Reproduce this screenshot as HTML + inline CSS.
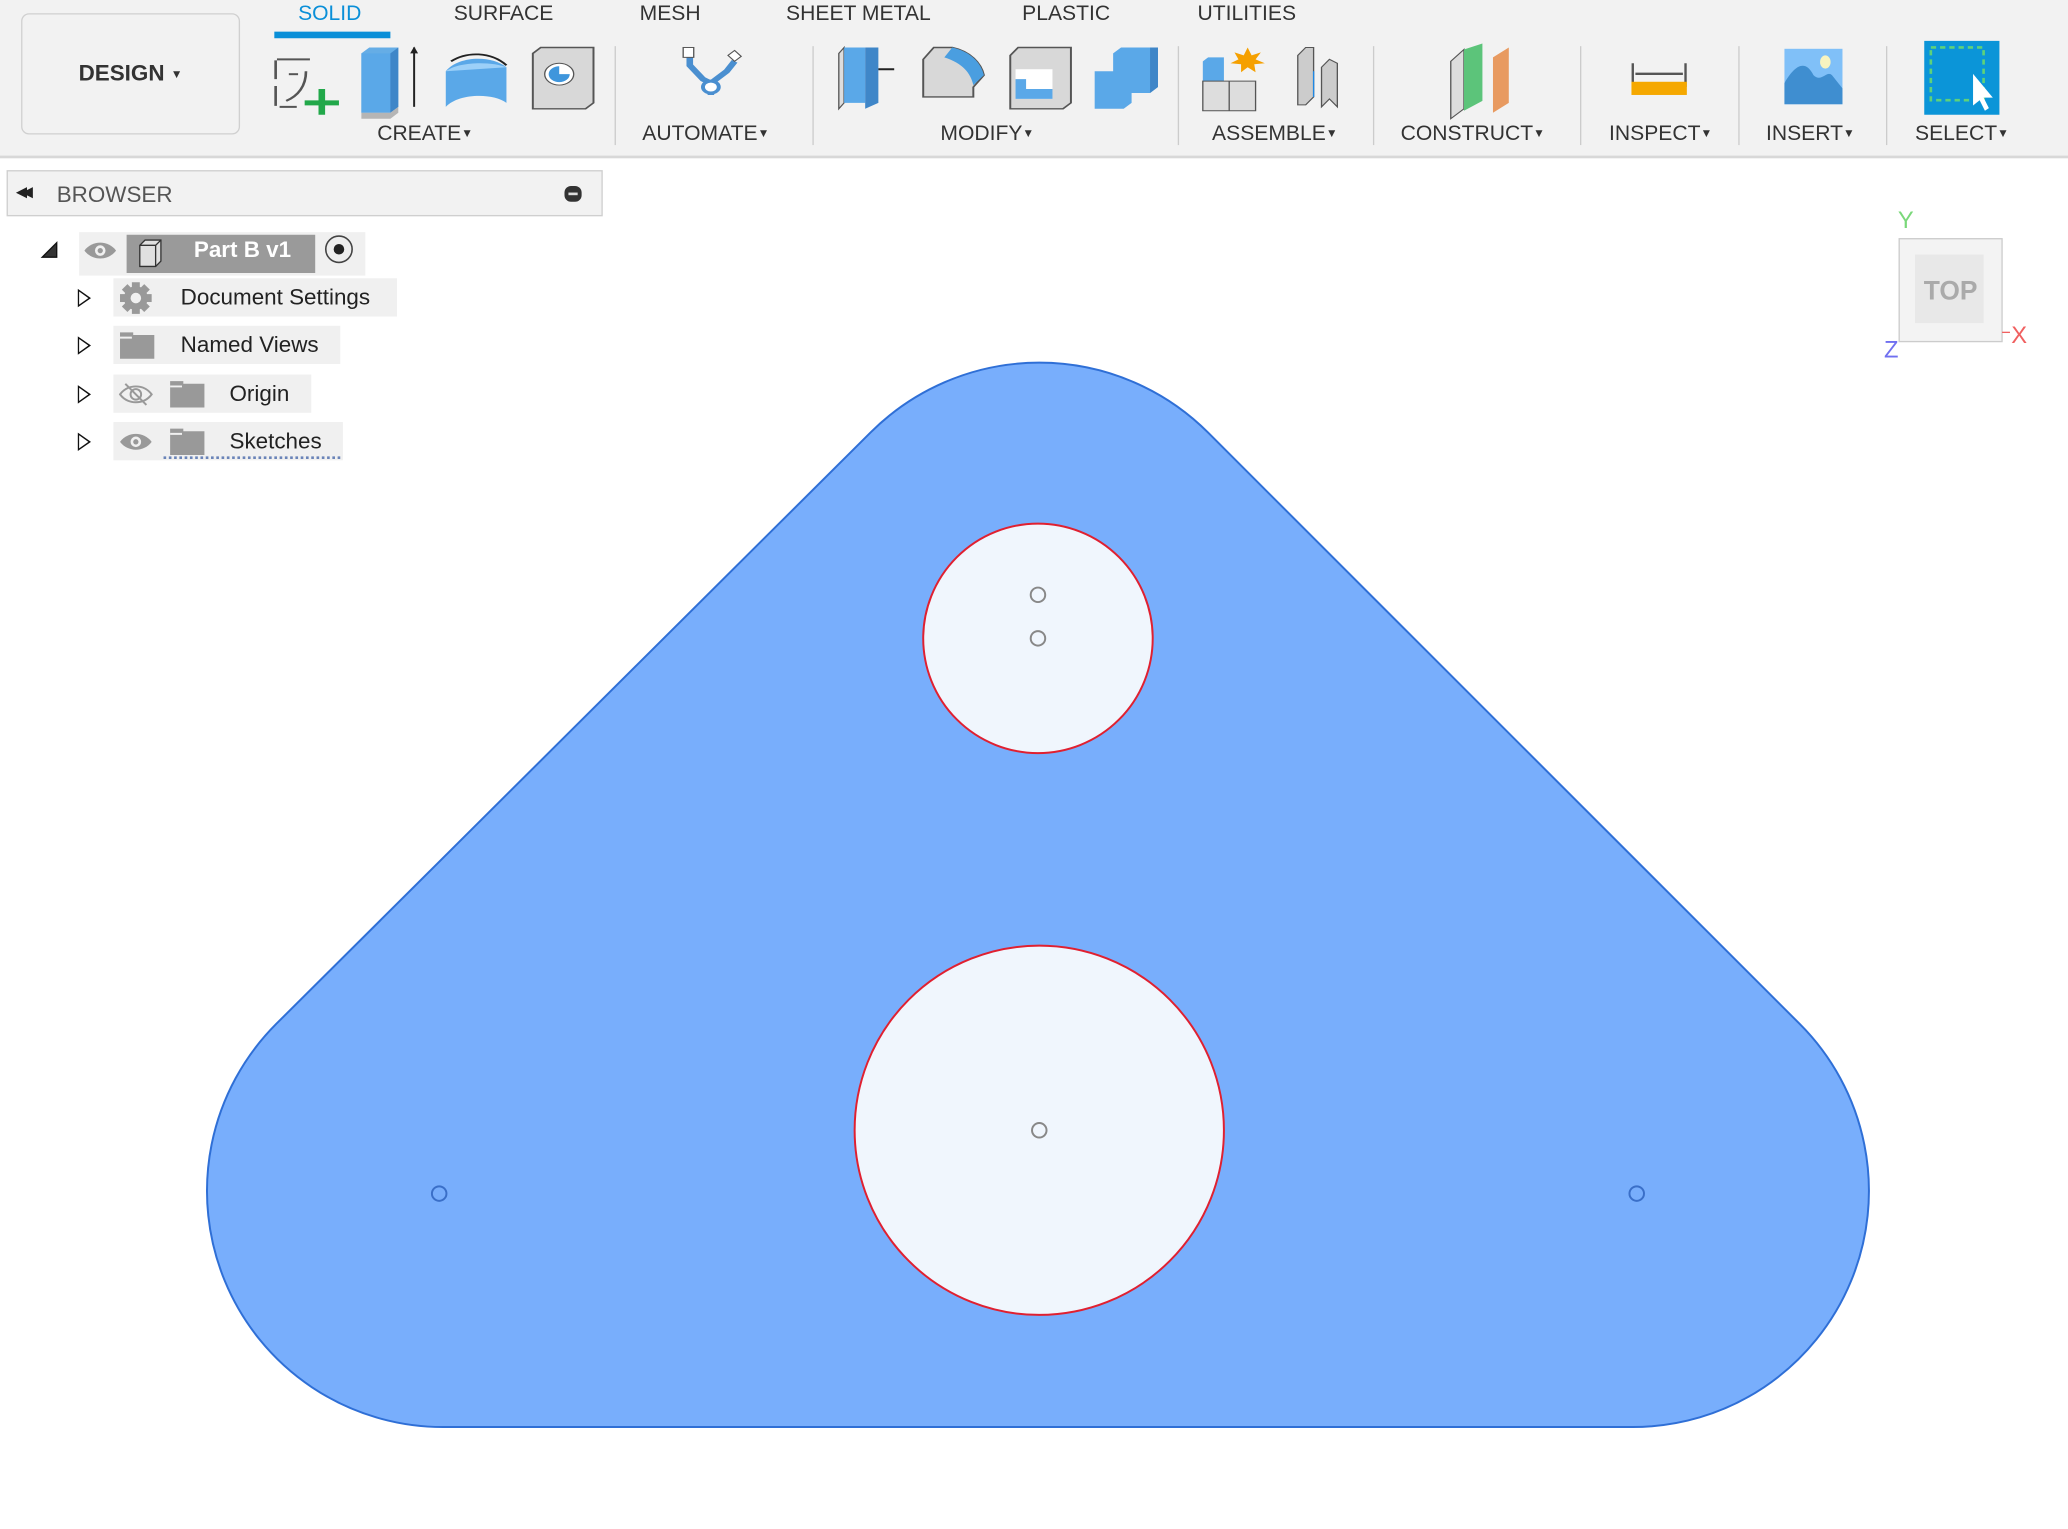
<!DOCTYPE html>
<html><head><meta charset="utf-8">
<style>
html,body{margin:0;padding:0;background:#fff;overflow:hidden;width:2068px;height:1528px}
#w{position:absolute;left:0;top:0;width:1568px;height:1159px;transform:scale(1.31888);transform-origin:0 0;font-family:"Liberation Sans",sans-serif;color:#333}
.tb{position:absolute;left:0;top:0;width:1568px;height:118px;background:#f2f2f2;border-bottom:2px solid #d8d8d8}
.design{position:absolute;left:16px;top:10px;width:164px;height:90px;border:1.5px solid #d0d0d0;border-radius:6px;background:#f2f2f2;font-size:17px;font-weight:bold;color:#333;display:flex;align-items:center;justify-content:center}
.tab{position:absolute;top:2px;font-size:16px;color:#333}
.lab{position:absolute;top:93px;font-size:16px;color:#333;white-space:nowrap}
.sep{position:absolute;top:35px;width:1px;height:75px;background:#ccc}
.tri{font-size:9px;vertical-align:2px}
.bh{position:absolute;left:5px;top:129px;width:452px;height:35px;background:#f2f2f2;border:1.5px solid #cfcfcf;box-sizing:border-box}
.row{position:absolute;background:#f0f0f0;font-size:17px;color:#222}
.exp{position:absolute;left:59px;width:0;height:0;border-top:7px solid transparent;border-bottom:7px solid transparent;border-left:10px solid #111}
.exp:after{content:"";position:absolute;left:-9px;top:-5px;border-top:5px solid transparent;border-bottom:5px solid transparent;border-left:7px solid #fff}
</style></head><body><div id="w">
<div class="tb">
 <div class="design">DESIGN&nbsp;<span class="tri">▼</span></div>
 <div class="tab" style="left:226px;color:#0a8fd8">SOLID</div>
 <div style="position:absolute;left:208px;top:24px;width:88px;height:5px;background:#0a8fd8"></div>
 <div class="tab" style="left:344px">SURFACE</div>
 <div class="tab" style="left:485px">MESH</div>
 <div class="tab" style="left:596px">SHEET METAL</div>
 <div class="tab" style="left:775px">PLASTIC</div>
 <div class="tab" style="left:908px">UTILITIES</div>
 <div class="lab" style="left:286px">CREATE<span class="tri">▼</span></div>
 <div class="lab" style="left:487px">AUTOMATE<span class="tri">▼</span></div>
 <div class="lab" style="left:713px">MODIFY<span class="tri">▼</span></div>
 <div class="lab" style="left:919px">ASSEMBLE<span class="tri">▼</span></div>
 <div class="lab" style="left:1062px">CONSTRUCT<span class="tri">▼</span></div>
 <div class="lab" style="left:1220px">INSPECT<span class="tri">▼</span></div>
 <div class="lab" style="left:1339px">INSERT<span class="tri">▼</span></div>
 <div class="lab" style="left:1452px">SELECT<span class="tri">▼</span></div>
 <div class="sep" style="left:466px"></div><div class="sep" style="left:616px"></div><div class="sep" style="left:893px"></div><div class="sep" style="left:1041px"></div><div class="sep" style="left:1198px"></div><div class="sep" style="left:1318px"></div><div class="sep" style="left:1430px"></div>
 <svg style="position:absolute;left:0;top:0" width="1568" height="118">
  <g transform="translate(0,9) scale(1,0.75)">
  <g stroke="#555" stroke-width="2" fill="none"><path d="M209 49V68M209 75V95M210 48H235M212 96H225M232 60c0 15-6 25-15 30"/><path d="M219 63h7"/></g>
  <path d="M244 78v26M231 92h26" stroke="#22a84a" stroke-width="5"/>
  <path d="M274 42l6-6h22v60l-6 6h-22z" fill="#65ade6"/><path d="M296 42h-22v60h22z" fill="#5aa8e8"/><path d="M296 42l6-6v60l-6 6z" fill="#3f86c8"/><path d="M274 102h22l6-6v6l-6 6h-22z" fill="#b5b5b5"/><path d="M314 36v60" stroke="#222" stroke-width="1.5"/><path d="M311 42l3-7 3 7z" fill="#222"/>
  <path d="M338 60c10-16 35-16 46-4v36c-10-10-36-10-46 4z" fill="#5aa8e8"/><path d="M338 60c10-10 35-10 46-4" fill="#9cd0f8"/><path d="M342 50c12-10 30-10 42 4" stroke="#222" stroke-width="1.8" fill="none"/>
  <path d="M404 42l6-6h40v56l-6 6h-40z" fill="#d8d8d8" stroke="#555" stroke-width="1.5"/><circle cx="424" cy="63" r="11" fill="#fff" stroke="#555"/><path d="M424 55a8 8 0 1 0 8 8h-8z" fill="#3f96dc"/>
  <path d="M523 44v10l10 14 6 4v12M557 50l-6 10-12 12" stroke="#4a8fd0" stroke-width="5" fill="none"/><circle cx="539" cy="76" r="6" fill="#fff" stroke="#4a8fd0" stroke-width="3"/><rect x="518" y="36" width="8" height="10" fill="#fff" stroke="#555"/><path d="M552 44l5-5 5 6-5 5z" fill="#fff" stroke="#555"/>
  <path d="M636 42l4-6v56l-4 6z" fill="#ddd" stroke="#555"/><path d="M640 36h16v56h-16z" fill="#5aa8e8"/><path d="M656 36l10-0v56l-10 6z" fill="#3f86c8"/><path d="M666 58h12" stroke="#222" stroke-width="2"/>
  <path d="M700 48l8-12h14c14 4 22 16 24 28l-8 12v10h-38z" fill="#d8d8d8" stroke="#555" stroke-width="1.5"/><path d="M722 36c14 4 22 16 24 28l-8 10c-2-12-8-22-22-28z" fill="#4a9ee0"/>
  <path d="M766 44l6-8h40v56l-6 6h-40z" fill="#d8d8d8" stroke="#555" stroke-width="1.5"/><rect x="770" y="58" width="28" height="30" fill="#fff"/><path d="M770 68h8v10h20v10h-28z" fill="#5aa8e8"/>
  <path d="M830 60h14v-18l6-6h28v40l-6 6h-14v10l-6 6h-22z" fill="#5aa8e8"/><path d="M872 36l6 0v40l-6 6z" fill="#3f86c8"/>
  <path d="M912 50l4-4h12v24h-16z" fill="#5aa8e8"/><path d="M912 70h40v30h-40z" fill="#ddd" stroke="#555"/><path d="M932 70v30" stroke="#555"/><path d="M946 36l3 8 7-3-4 7 7 4-8 1 1 8-6-5-5 5v-8l-8-1 6-4-3-7 7 3z" fill="#f5a000"/>
  <path d="M984 44l6-8h6v50l-6 8h-6z" fill="#ccc" stroke="#555"/><path d="M1008 48l-6 8v40l6-8 6 8v-44z" fill="#ccc" stroke="#555"/><path d="M996 60v26" stroke="#1e88e5"/>
  <path d="M1100 50l10-12v60l-10 10z" fill="#ddd" stroke="#555"/><path d="M1110 38l14-6v58l-14 10z" fill="#5cc47a"/><path d="M1132 46l12-10v56l-12 10z" fill="#e89a60"/>
  </g>
  <path d="M1238 48v18M1278 48v18M1240 56h36" stroke="#555" stroke-width="1.8"/><rect x="1237" y="62" width="42" height="10" fill="#f5a800"/>
  <rect x="1353" y="37" width="44" height="42" fill="#80c0f8"/><path d="M1353 79v-16c8-14 16-18 22-6 6 6 10-4 14 0l8 10v12z" fill="#3f8ed0"/><ellipse cx="1384" cy="47" rx="4" ry="5" fill="#f8f4c0"/>
  <rect x="1459" y="31" width="57" height="56" fill="#0b95d8"/><rect x="1464" y="36" width="40" height="40" fill="none" stroke="#5ed27a" stroke-width="2" stroke-dasharray="4 3"/><path d="M1496 56v24l5-4 4 8 3-2-4-8h7z" fill="#fff"/>
 </svg>
</div>

<div class="bh"><span style="position:absolute;left:6px;top:9px;font-size:11px;color:#222;letter-spacing:-4px">◀◀</span><span style="position:absolute;left:37px;top:8px;font-size:17px;color:#555">BROWSER</span><span style="position:absolute;left:422px;top:11px;width:13px;height:12px;border-radius:5px;background:#333"></span><span style="position:absolute;left:425px;top:16px;width:7px;height:2px;background:#ddd"></span></div>

<svg style="position:absolute;left:30px;top:182px" width="16" height="14"><path d="M2 13L13 2V13Z" fill="#333" stroke="#111"/></svg>
<div class="row" style="left:60px;top:176px;width:217px;height:33px"></div>
<svg style="position:absolute;left:63px;top:181px" width="26" height="18"><path d="M1 9c6-8 18-8 24 0c-6 8-18 8-24 0z" fill="#999"/><circle cx="13" cy="9" r="4" fill="#f0f0f0"/><circle cx="13" cy="9" r="2" fill="#999"/></svg>
<div style="position:absolute;left:96px;top:178px;width:143px;height:29px;background:#9a9a9a"></div>
<svg style="position:absolute;left:104px;top:180px" width="20" height="24"><path d="M2 6l4-4h12v16l-4 4H2z" fill="#e0e0e0" stroke="#333"/><path d="M14 6v16M2 6h12l4-4" stroke="#333" fill="none"/></svg>
<div style="position:absolute;left:147px;top:180px;font-size:17px;font-weight:bold;color:#fff">Part B v1</div>
<svg style="position:absolute;left:245px;top:177px" width="24" height="24"><circle cx="12" cy="12" r="10" fill="#eee" stroke="#444" stroke-width="1.2"/><circle cx="12" cy="12" r="4" fill="#222"/></svg>

<div class="exp" style="top:219px"></div>
<div class="row" style="left:86px;top:211px;width:215px;height:29px"></div>
<svg style="position:absolute;left:90px;top:213px" width="26" height="26"><g fill="#999"><circle cx="13" cy="13" r="9"/><rect x="10" y="1" width="6" height="24"/><rect x="1" y="10" width="24" height="6"/><rect x="10" y="1" width="6" height="24" transform="rotate(45 13 13)"/><rect x="10" y="1" width="6" height="24" transform="rotate(-45 13 13)"/></g><circle cx="13" cy="13" r="4" fill="#f0f0f0"/></svg>
<div style="position:absolute;left:137px;top:216px;font-size:17px;color:#222">Document Settings</div>

<div class="exp" style="top:255px"></div>
<div class="row" style="left:86px;top:247px;width:172px;height:29px"></div>
<svg style="position:absolute;left:90px;top:251px" width="28" height="22"><path d="M1 1h10v2h16v18H1z" fill="#999"/><path d="M1 5h9" stroke="#f0f0f0" stroke-width="1.5"/></svg>
<div style="position:absolute;left:137px;top:252px;font-size:17px;color:#222">Named Views</div>

<div class="exp" style="top:292px"></div>
<div class="row" style="left:86px;top:284px;width:150px;height:29px"></div>
<svg style="position:absolute;left:90px;top:289px" width="26" height="20"><path d="M1 10c6-8 18-8 24 0c-6 8-18 8-24 0z" fill="none" stroke="#999" stroke-width="1.5"/><circle cx="13" cy="10" r="4" fill="none" stroke="#999" stroke-width="1.5"/><path d="M5 2l16 16" stroke="#999" stroke-width="1.5"/></svg>
<svg style="position:absolute;left:128px;top:288px" width="28" height="22"><path d="M1 1h10v2h16v18H1z" fill="#999"/><path d="M1 5h9" stroke="#f0f0f0" stroke-width="1.5"/></svg>
<div style="position:absolute;left:174px;top:289px;font-size:17px;color:#222">Origin</div>

<div class="exp" style="top:328px"></div>
<div class="row" style="left:86px;top:320px;width:174px;height:29px"></div>
<svg style="position:absolute;left:90px;top:325px" width="26" height="20"><path d="M1 10c6-8 18-8 24 0c-6 8-18 8-24 0z" fill="#999"/><circle cx="13" cy="10" r="4" fill="#f0f0f0"/><circle cx="13" cy="10" r="2" fill="#999"/></svg>
<svg style="position:absolute;left:128px;top:324px" width="28" height="22"><path d="M1 1h10v2h16v18H1z" fill="#999"/><path d="M1 5h9" stroke="#f0f0f0" stroke-width="1.5"/></svg>
<div style="position:absolute;left:174px;top:325px;font-size:17px;color:#222">Sketches</div>
<div style="position:absolute;left:124px;top:342px;width:134px;height:4px;border-bottom:2.5px dotted #6a84b8"></div>

<svg style="position:absolute;left:0;top:0" width="1568" height="1159">
 <path d="M660 328A181 181 0 0 1 916 328L1364.6 776.4A179 179 0 0 1 1238 1082L336 1082A179 179 0 0 1 209.4 776.4Z" fill="#78aefc" stroke="#2f6fd6" stroke-width="1.5"/>
 <circle cx="787" cy="484" r="87" fill="#f0f6fd" stroke="#e02030" stroke-width="1.5"/>
 <circle cx="788" cy="857" r="140" fill="#f0f6fd" stroke="#e02030" stroke-width="1.5"/>
 <g fill="none" stroke="#888" stroke-width="1.5"><circle cx="787" cy="451" r="5.5"/><circle cx="787" cy="484" r="5.5"/><circle cx="788" cy="857" r="5.5"/></g>
 <g fill="none" stroke="#3a6fc8" stroke-width="1.5"><circle cx="333" cy="905" r="5.5"/><circle cx="1241" cy="905" r="5.5"/></g>
 <rect x="1440" y="181" width="78" height="78" fill="#f3f3f3" stroke="#ccc"/>
 <rect x="1452" y="193" width="52" height="52" fill="#e8e8e8"/>
 <text x="1479" y="227" text-anchor="middle" font-family="Liberation Sans,sans-serif" font-size="20" font-weight="bold" fill="#aaa">TOP</text>
 <text x="1445" y="173" text-anchor="middle" font-family="Liberation Sans,sans-serif" font-size="18" fill="#7ad87a">Y</text>
 <text x="1531" y="260" text-anchor="middle" font-family="Liberation Sans,sans-serif" font-size="18" fill="#f06060">X</text>
 <text x="1434" y="271" text-anchor="middle" font-family="Liberation Sans,sans-serif" font-size="18" fill="#7070f0">Z</text>
 <path d="M1518 252h6" stroke="#f06060"/>
</svg>
</div></body></html>
